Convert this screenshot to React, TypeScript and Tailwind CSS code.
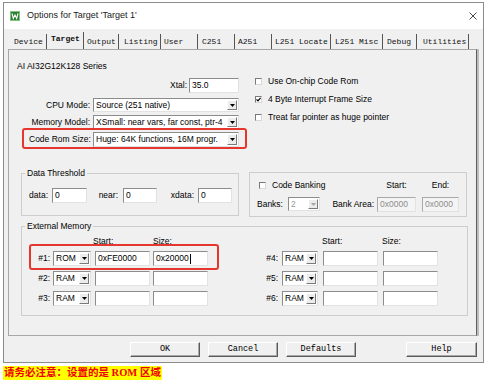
import React from "react";

const sunken =
  "bg-white border border-t-[#8c8c8c] border-l-[#8c8c8c] border-r-[#e2e2e2] border-b-[#e2e2e2]";

function Input({
  value,
  className = "",
  disabled = false,
  caret = false,
}: {
  value?: string;
  className?: string;
  disabled?: boolean;
  caret?: boolean;
}) {
  return (
    <div
      className={`flex items-center pl-[2px] whitespace-nowrap overflow-hidden ${
        disabled
          ? "bg-[#f4f4f4] text-[#8d8d8d] border border-t-[#a8a8a8] border-l-[#a8a8a8] border-r-[#e2e2e2] border-b-[#e2e2e2]"
          : sunken
      } ${className}`}
    >
      {value}
      {caret && <span className="ml-[1px] w-px h-[10px] bg-black" />}
    </div>
  );
}

function Select({
  value,
  className = "",
  disabled = false,
}: {
  value: string;
  className?: string;
  disabled?: boolean;
}) {
  return (
    <div className={`flex items-stretch ${sunken} ${className}`}>
      <span
        className={`flex-1 pl-[2px] flex items-center whitespace-nowrap overflow-hidden ${
          disabled ? "text-[#9a9a9a]" : ""
        }`}
      >
        {value}
      </span>
      <span className="w-[10px] my-[1px] mr-[1px] flex items-center justify-center bg-[#ececec] border border-t-white border-l-white border-r-[#7a7a7a] border-b-[#7a7a7a]">
        <svg width="5" height="3" viewBox="0 0 5 3">
          <path d="M0 0h5L2.5 3z" fill={disabled ? "#a6a6a6" : "#000"} />
        </svg>
      </span>
    </div>
  );
}

function Check({ checked = false }: { checked?: boolean }) {
  return (
    <span className="w-[7px] h-[7px] shrink-0 bg-white border border-t-[#7a7a7a] border-l-[#7a7a7a] border-r-[#d8d8d8] border-b-[#d8d8d8] flex items-center justify-center">
      {checked && (
        <svg width="5" height="5" viewBox="0 0 5 5">
          <path d="M0.5 2.3L2 3.8L4.6 0.8" stroke="#000" strokeWidth="1.2" fill="none" />
        </svg>
      )}
    </span>
  );
}

const tabs = [
  { name: "Device", cls: "w-[39px] pl-[6px]" },
  { name: "Target", cls: "w-[37px] pl-[4px]", active: true },
  { name: "Output", cls: "w-[35px] pl-[3px]" },
  { name: "Listing", cls: "w-[42px] pl-[5px]" },
  { name: "User", cls: "w-[37px] pl-[3px]" },
  { name: "C251", cls: "w-[37px] pl-[4px]" },
  { name: "A251", cls: "w-[37px] pl-[3px]" },
  { name: "L251 Locate", cls: "w-[59px] pl-[3px]" },
  { name: "L251 Misc", cls: "w-[52px] pl-[4px]" },
  { name: "Debug", cls: "w-[34px] pl-[4px]" },
  { name: "Utilities", cls: "w-[52px] pl-[6px]" },
];

const memRows = [
  { l: "#1:", lt: "ROM", start: "0xFE0000", size: "0x20000", r: "#4:" },
  { l: "#2:", lt: "RAM", start: "", size: "", r: "#5:" },
  { l: "#3:", lt: "RAM", start: "", size: "", r: "#6:" },
];

export default function App() {
  return (
    <div className="w-[491px] h-[384px] bg-white relative overflow-hidden font-['Liberation_Sans',Arial,sans-serif] text-black text-[8.5px]">
      {/* ===== dialog window ===== */}
      <div className="ml-[3px] mt-[2px] w-[481px] h-[361px] border border-[#8c8c8c] bg-[#f0f0f0] flex flex-col">
        {/* title bar */}
        <div className="h-[26px] bg-white flex items-center shrink-0">
          <svg className="ml-[6px]" width="10" height="10" viewBox="0 0 10 10">
            <rect x="0" y="0" width="10" height="10" fill="#2f7d34" />
            <rect x="0.5" y="0.5" width="9" height="9" fill="none" stroke="#7cc47f" />
            <path d="M2 2.5L3.3 7.5L5 4L6.7 7.5L8 2.5" stroke="#fff" strokeWidth="1.1" fill="none" />
          </svg>
          <span className="ml-[7px] text-[9px] text-[#1a1a1a]">Options for Target 'Target 1'</span>
          <svg className="ml-auto mr-[6px]" width="8" height="8" viewBox="0 0 8 8">
            <path d="M0.5 0.5L7.5 7.5M7.5 0.5L0.5 7.5" stroke="#333" strokeWidth="0.9" />
          </svg>
        </div>

        {/* tabs */}
        <div className="h-[20px] ml-[4px] flex items-end font-['Liberation_Mono',monospace] text-[8px] text-[#111] shrink-0">
          {tabs.map((t) => (
            <div
              key={t.name}
              className={`${t.cls} flex items-center whitespace-nowrap border-r border-[#555] ${
                t.active ? "h-[17px] pb-[3px] font-bold" : "h-[15px]"
              }`}
            >
              {t.name}
            </div>
          ))}
        </div>

        {/* ===== tab panel ===== */}
        <div className="ml-[4px] w-[469px] h-[287px] shrink-0 border border-[#a8a8a8] border-r-[#5e5e5e] shadow-[2px_0_0_#bdbdbd] flex flex-col">
          <div className="ml-[8px] mt-[11px] h-[11px] leading-[11px]">AI AI32G12K128 Series</div>

          <div className="flex">
            {/* left form column */}
            <div className="ml-[13px] w-[224px] px-[7px] flex flex-col">
              <div className="mt-[6px] h-[15px] flex items-center">
                <span className="flex-1 text-right pr-[2px]">Xtal:</span>
                <Input value="35.0" className="w-[50px] h-[15px]" />
              </div>
              <div className="mt-[5px] h-[14px] flex items-center">
                <span className="w-[61px] text-right whitespace-nowrap">CPU Mode:</span>
                <Select value="Source (251 native)" className="ml-[3px] w-[146px] h-[14px]" />
              </div>
              <div className="mt-[3px] h-[14px] flex items-center">
                <span className="w-[61px] text-right whitespace-nowrap">Memory Model:</span>
                <Select value="XSmall: near vars, far const, ptr-4" className="ml-[3px] w-[146px] h-[14px]" />
              </div>
              <div className="mt-[3px] h-[15px] flex items-center">
                <span className="w-[61px] text-right whitespace-nowrap">Code Rom Size:</span>
                <Select value="Huge: 64K functions, 16M progr." className="ml-[3px] w-[146px] h-[15px]" />
              </div>
            </div>

            {/* right checkbox column */}
            <div className="ml-[9px] mt-[3px] flex flex-col gap-[6px]">
              <label className="h-[12px] flex items-center gap-[6px] whitespace-nowrap">
                <Check /> Use On-chip Code Rom
              </label>
              <label className="h-[12px] flex items-center gap-[6px] whitespace-nowrap">
                <Check checked /> 4 Byte Interrupt Frame Size
              </label>
              <label className="h-[12px] flex items-center gap-[6px] whitespace-nowrap">
                <Check /> Treat far pointer as huge pointer
              </label>
            </div>
          </div>

          {/* threshold + banking */}
          <div className="flex mt-[21px] items-start">
            <fieldset className="ml-[12px] w-[218px] border border-[#cdcdcd] pb-[12px]">
              <legend className="ml-[3px] px-[2px] h-[10px] leading-[10px]">Data Threshold</legend>
              <div className="mt-[10px] h-[15px] flex items-center">
                <span className="w-[28px] text-right pr-[2px]">data:</span>
                <Input value="0" className="ml-[2px] w-[35px] h-[15px]" />
                <span className="w-[34px] text-right pr-[3px]">near:</span>
                <Input value="0" className="ml-[2px] w-[34px] h-[15px]" />
                <span className="w-[39px] text-right pr-[2px]">xdata:</span>
                <Input value="0" className="ml-[2px] w-[34px] h-[15px]" />
              </div>
            </fieldset>

            <div className="ml-[10px] mt-[4px] w-[218px] h-[45px] border border-[#cdcdcd] flex flex-col">
              <div className="mt-[6px] h-[12px] flex items-center">
                <label className="ml-[9px] w-[118px] flex items-center gap-[6px] whitespace-nowrap">
                  <Check /> Code Banking
                </label>
                <span className="w-[39px] text-center">Start:</span>
                <span className="ml-[6px] w-[37px] text-center">End:</span>
              </div>
              <div className="mt-[6px] h-[14px] flex items-center">
                <span className="ml-[7px] w-[31px]">Banks:</span>
                <Select value="2" disabled className="w-[32px] h-[14px]" />
                <span className="w-[57px] text-right pr-[3px] whitespace-nowrap">Bank Area:</span>
                <Input value="0x0000" disabled className="w-[39px] h-[15px]" />
                <Input value="0x0000" disabled className="ml-[6px] w-[37px] h-[15px]" />
              </div>
            </div>
          </div>

          {/* external memory */}
          <fieldset className="mt-[4px] ml-[12px] w-[447px] border border-[#cdcdcd] pb-[9px]">
            <legend className="ml-[3px] px-[2px] h-[10px] leading-[10px]">External Memory</legend>
            <div className="mt-[5px] h-[10px] flex items-center">
              <span className="ml-[71px] w-[60px]">Start:</span>
              <span className="w-[169px]">Size:</span>
              <span className="w-[60px]">Start:</span>
              <span>Size:</span>
            </div>
            {memRows.map((r) => (
              <div key={r.l} className="mt-[5px] h-[15px] flex items-center">
                <span className="w-[28px] text-right">{r.l}</span>
                <Select value={r.lt} className="ml-[3px] w-[38px] h-[15px]" />
                <Input value={r.start} className="ml-[4px] w-[55px] h-[15px]" />
                <Input value={r.size} caret={r.l === "#1:"} className="ml-[3px] w-[55px] h-[15px]" />
                <span className="w-[70px] text-right">{r.r}</span>
                <Select value="RAM" className="ml-[4px] w-[36px] h-[15px]" />
                <Input className="ml-[5px] w-[55px] h-[15px]" />
                <Input className="ml-[5px] w-[55px] h-[15px]" />
              </div>
            ))}
          </fieldset>
        </div>

        {/* buttons */}
        <div className="mt-[6px] ml-[126px] flex font-['Liberation_Mono',monospace] text-[8.5px]">
          {["OK", "Cancel", "Defaults"].map((b, i) => (
            <button
              key={b}
              className={`${i > 0 ? "ml-[8px]" : ""} w-[70px] h-[15px] bg-[#f0f0f0] border border-t-white border-l-white border-r-[#5a5a5a] border-b-[#5a5a5a] shadow-[inset_-1px_-1px_0_#a9a9a9] flex items-center justify-center`}
            >
              {b}
            </button>
          ))}
          <button className="ml-[50px] w-[71px] h-[15px] bg-[#f0f0f0] border border-t-white border-l-white border-r-[#5a5a5a] border-b-[#5a5a5a] shadow-[inset_-1px_-1px_0_#a9a9a9] flex items-center justify-center">
            Help
          </button>
        </div>
      </div>

      {/* note under the screenshot */}
      <div className="mt-[3px] ml-[3px] inline-block bg-[#ffff00] px-[1px] h-[14px] leading-[14px] text-[10.5px] font-bold text-[#f00000] font-['Liberation_Serif','Noto_Sans_CJK_SC',serif] whitespace-nowrap">
        请务必注意：设置的是 ROM 区域
      </div>

      {/* red annotation frames */}
      <div className="absolute left-[22px] top-[128px] w-[225px] h-[21px] border-2 border-[#e5372e] rounded-[3px]" />
      <div className="absolute left-[29px] top-[244px] w-[190px] h-[26px] border-2 border-[#e5372e] rounded-[3px]" />
    </div>
  );
}
